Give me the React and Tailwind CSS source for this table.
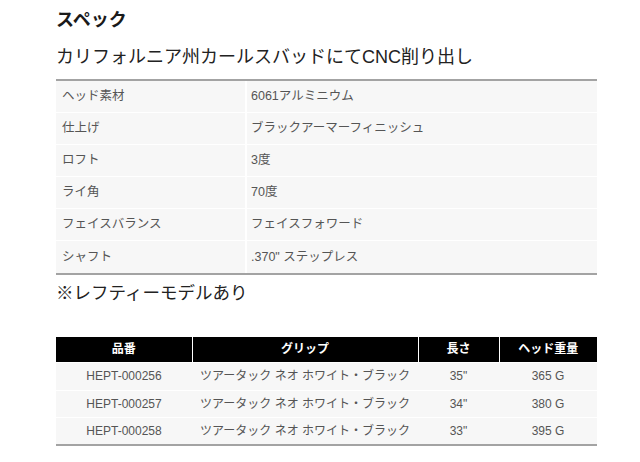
import React from 'react';

const specs = [
  ['ヘッド素材', '6061アルミニウム'],
  ['仕上げ', 'ブラックアーマーフィニッシュ'],
  ['ロフト', '3度'],
  ['ライ角', '70度'],
  ['フェイスバランス', 'フェイスフォワード'],
  ['シャフト', '.370" ステップレス'],
];

const models = [
  ['HEPT-000256', 'ツアータック ネオ ホワイト・ブラック', '35"', '365 G', 'h-[28px]'],
  ['HEPT-000257', 'ツアータック ネオ ホワイト・ブラック', '34"', '380 G', 'h-[27px]'],
  ['HEPT-000258', 'ツアータック ネオ ホワイト・ブラック', '33"', '395 G', 'h-[28px]'],
];

const font = "font-['Liberation_Sans','Noto_Sans_CJK_JP',sans-serif]";

export default function App() {
  return (
    <div className={`w-[640px] h-[462px] bg-white pl-[56px] pt-[8px] ${font}`}>
      <h2 className="text-[18px] font-bold leading-[24px] text-[#1a1a1a]">スペック</h2>
      <p className="mt-[11px] text-[18px] leading-[28px] text-[#222]">カリフォルニア州カールスバッドにてCNC削り出し</p>

      <div className="mt-[8px] w-[541px] border-t-2 border-b-2 border-[#a3a3a3]">
        {specs.map(([k, v]) => (
          <div key={k} className="flex h-[32px] border-b border-white last:border-b-0 text-[12.5px] text-[#555]">
            <div className="w-[189px] bg-[#f7f7f7] pl-[6px] flex items-center">{k}</div>
            <div className="w-[2px] bg-white" />
            <div className="flex-1 bg-[#f7f7f7] pl-[4px] flex items-center">{v}</div>
          </div>
        ))}
      </div>

      <p className="mt-[5px] text-[17.5px] leading-[26px] text-[#222]">※レフティーモデルあり</p>

      <table className="mt-[31px] w-[541px] border-collapse text-[12px] border-b-2 border-[#a3a3a3]">
        <thead>
          <tr className="h-[25px] bg-black text-white font-bold">
            <th className="w-[136px] border-r border-white font-bold">品番</th>
            <th className="w-[226px] border-r border-white font-bold">グリップ</th>
            <th className="w-[81px] border-r border-white font-bold">長さ</th>
            <th className="font-bold">ヘッド重量</th>
          </tr>
        </thead>
        <tbody className="text-[#555]">
          {models.map(([id, grip, len, w, h]) => (
            <tr key={id} className={`${h} bg-[#f7f7f7] border-t border-white text-center`}>
              <td>{id}</td>
              <td>{grip}</td>
              <td>{len}</td>
              <td>{w}</td>
            </tr>
          ))}
        </tbody>
      </table>
    </div>
  );
}
